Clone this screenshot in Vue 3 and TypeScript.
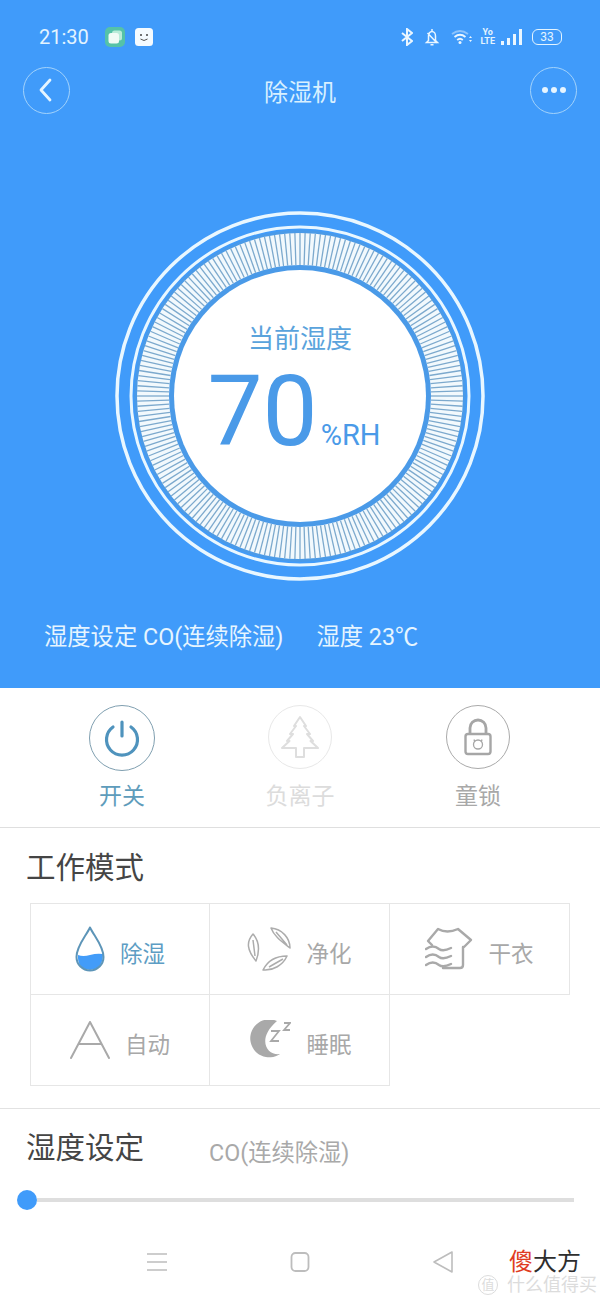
<script setup lang="ts">
const ticks: { x1: number; y1: number; x2: number; y2: number }[] = [];
const count = 200;
for (let i = 0; i < count; i++) {
  const a = (i / count) * Math.PI * 2;
  const c = Math.cos(a);
  const s = Math.sin(a);
  ticks.push({ x1: 185 + c * 131, y1: 185 + s * 131, x2: 185 + c * 163, y2: 185 + s * 163 });
}
</script>

<template>
  <div class="page">
    <section class="hero">
      <div class="status">
        <span class="time">21:30</span>
        <svg class="app-a" width="20" height="20" viewBox="0 0 20 20">
          <rect width="20" height="20" rx="5" fill="#55c2a8" />
          <rect x="7" y="3.500" width="10" height="10" rx="2.500" fill="#b9ecd9" />
          <rect x="3.500" y="6" width="10.500" height="10.500" rx="2.500" fill="#f1fbf6" />
        </svg>
        <svg class="app-b" width="18" height="18" viewBox="0 0 18 18">
          <rect width="18" height="18" rx="3.500" fill="#f4fbff" />
          <circle cx="6" cy="7" r="1" fill="#444" />
          <circle cx="12" cy="7" r="1" fill="#444" />
          <path d="M5.500 11 Q9 14 12.500 11" fill="none" stroke="#555" stroke-width="1" />
        </svg>
        <span class="spring"></span>
        <svg class="s-bt" width="12" height="18" viewBox="0 0 12 18" fill="none" stroke="#eaf6ff" stroke-width="2">
          <path d="M1 5 L11 13 L6 17 V1 L11 5 L1 13" />
        </svg>
        <svg class="s-bell" width="16" height="18" viewBox="0 0 16 18" fill="none" stroke="#eaf6ff" stroke-width="1.500">
          <path d="M8 1 V3 M4.500 12.500 V8 a3.500 4.500 0 0 1 7 0 V12.500 L13.500 14.500 H2.500 Z M6.500 16.800 H9.500 M3.500 5 L13 15" />
        </svg>
        <svg class="s-wifi" width="22" height="16" viewBox="0 0 22 16" fill="none" stroke="#eaf6ff" stroke-width="1.800">
          <path d="M1 5 Q9 -1 17 5" stroke-opacity=".45" />
          <path d="M3.500 8 Q9 3.500 14.500 8" />
          <path d="M6.200 11 Q9 8.500 11.800 11" />
          <circle cx="9" cy="13.500" r="1.500" fill="#eaf6ff" stroke="none" />
          <path d="M19.500 7 L21 9 H18 Z M18 11 H21 L19.500 13 Z" fill="#eaf6ff" stroke="none" />
        </svg>
        <span class="s-volte"><span>Yo</span><span>LTE</span></span>
        <svg class="s-sig" width="22" height="18" viewBox="0 0 22 18" fill="#eaf6ff">
          <rect x="0" y="13" width="3" height="4" />
          <rect x="6" y="10" width="3" height="7" />
          <rect x="12" y="6" width="3" height="11" />
          <rect x="18" y="1" width="3" height="16" />
        </svg>
        <span class="s-batt">33</span>
      </div>

      <header class="bar">
        <button class="round" type="button">
          <svg class="back" width="14" height="26" viewBox="0 0 14 26" fill="none" stroke="#e6f5ff" stroke-width="2.800" stroke-linecap="round" stroke-linejoin="round">
            <path d="M12 3 L3 13 L12 23" />
          </svg>
        </button>
        <h1 class="title">除湿机</h1>
        <button class="round" type="button">
          <svg width="26" height="8" viewBox="0 0 26 8" fill="#e6f5ff">
            <circle cx="4" cy="4" r="3" />
            <circle cx="13" cy="4" r="3" />
            <circle cx="22" cy="4" r="3" />
          </svg>
        </button>
      </header>

      <div class="gauge">
        <svg width="370" height="370" viewBox="0 0 370 370">
          <circle cx="185" cy="185" r="183" fill="none" stroke="#e9f7ff" stroke-width="3.500" />
          <circle cx="185" cy="185" r="169" fill="none" stroke="#e9f7ff" stroke-width="3" />
          <circle cx="185" cy="185" r="166" fill="#4a9ae8" />
          <circle cx="185" cy="185" r="147" fill="none" stroke="#f2f9fd" stroke-width="32" />
          <g stroke="#7ca9cd" stroke-width="1.300">
            <line v-for="(t, i) in ticks" :key="i" :x1="t.x1" :y1="t.y1" :x2="t.x2" :y2="t.y2" />
          </g>
          <circle cx="185" cy="185" r="126" fill="#ffffff" />
        </svg>
        <div class="readout">
          <div class="readout-label">当前湿度</div>
          <div class="readout-value"><span class="num">70</span><span class="unit">%RH</span></div>
        </div>
      </div>

      <div class="info">
        <span>湿度设定 CO(连续除湿)</span>
        <span>湿度 23℃</span>
      </div>
    </section>

    <section class="actions">
      <div class="action on">
        <div class="disc big">
          <svg width="38" height="38" viewBox="0 0 38 38" fill="none" stroke="#4f93bd" stroke-width="3.200" stroke-linecap="round">
            <path d="M19 3 V17" />
            <path d="M10 8 A15.500 15.500 0 1 0 28 8" />
          </svg>
        </div>
        <span>开关</span>
      </div>
      <div class="action off">
        <div class="disc">
          <svg width="38" height="44" viewBox="0 0 38 44" fill="none" stroke="#dedede" stroke-width="2" stroke-linejoin="round">
            <path d="M19 2 L25 11 H23 L29 19 H26 L32 26 H29.500 L37 33 H23 V42 H15 V33 H1 L8.500 26 H6 L12 19 H9 L15 11 H13 Z" />
          </svg>
        </div>
        <span>负离子</span>
      </div>
      <div class="action lock">
        <div class="disc">
          <svg width="28" height="38" viewBox="0 0 28 38" fill="none" stroke="#a6a6a6">
            <path d="M6 16 V10 a8 8 0 0 1 16 0 V16" stroke-width="2.800" />
            <rect x="1.500" y="16" width="25" height="20" rx="2.500" stroke-width="2.400" />
            <circle cx="14" cy="26.500" r="4.500" stroke-width="1.300" />
            <path d="M10 21.500 L10.800 24 M18 21.500 L17.200 24" stroke-width="1.300" />
          </svg>
        </div>
        <span>童锁</span>
      </div>
    </section>

    <section class="mode">
      <h2 class="heading">工作模式</h2>
      <div class="grid">
        <div class="cell active">
          <svg width="30" height="46" viewBox="0 0 30 46">
            <path d="M15 29 Q8 31 3 29 Q2 43 15 44 Q28 43 28 28 Q22 27 15 29Z" fill="#429cf9" />
            <path d="M15 1.500 C11 10 1.500 20 1.500 31 a13.500 13.500 0 0 0 27 0 C28.500 20 19 10 15 1.500Z" fill="none" stroke="#5d95b8" stroke-width="2" stroke-linejoin="round" />
          </svg>
          <span>除湿</span>
        </div>
        <div class="cell">
          <svg width="44" height="44" viewBox="0 0 44 44" fill="none" stroke="#acacac" stroke-width="1.500" stroke-linejoin="round">
            <path d="M6 7 C-1 15 0 23 9 34 C12 26 13 15 6 7Z M6 13 L8 29" />
            <path d="M24 1 C27 9 34 14 43 21 C43 11 35 2 24 1Z M29 5 L40 18" />
            <path d="M16 43 C26 44 36 38 40 29 C30 29 21 33 16 43Z M22 40 L36 32" />
          </svg>
          <span>净化</span>
        </div>
        <div class="cell">
          <svg width="48" height="44" viewBox="0 0 48 44" fill="none" stroke="#a9a9a9" stroke-width="2.400" stroke-linejoin="round" stroke-linecap="round">
            <path d="M7 18 L3 14 L13 2 Q22 7 33 2 L46 13 L39 20 H38 V38 Q38 41 35 41 H18" />
            <path d="M1 22 Q8 17 14 22 Q18 25 26 21" />
            <path d="M1 30 Q8 25 14 30 Q18 33 26 29" />
            <path d="M1 38 Q8 33 14 38 Q18 41 26 37" />
          </svg>
          <span>干衣</span>
        </div>
        <div class="cell">
          <svg width="40" height="38" viewBox="0 0 40 38" fill="none" stroke="#a9a9a9" stroke-width="2" stroke-linecap="round" stroke-linejoin="round">
            <path d="M1 37 L20 1 L39 37 M9 23 H31" />
          </svg>
          <span>自动</span>
        </div>
        <div class="cell">
          <svg width="44" height="40" viewBox="0 0 44 40">
            <path d="M30 1 A19 19 0 1 0 33 34 C20 36 9 19 30 1Z" fill="#a9a9a9" />
            <path d="M24 11 H32 L24 21 H32 M37 3 H43 L37 10 H43" fill="none" stroke="#a9a9a9" stroke-width="1.800" />
          </svg>
          <span>睡眠</span>
        </div>
      </div>
    </section>

    <section class="setting">
      <div class="setting-head">
        <h2 class="heading">湿度设定</h2>
        <span class="setting-value">CO(连续除湿)</span>
      </div>
      <div class="slider">
        <span class="thumb"></span>
        <span class="track"></span>
      </div>
    </section>

    <nav class="nav">
      <svg width="22" height="20" viewBox="0 0 22 20" stroke="#bdbdbd" stroke-width="1.500">
        <path d="M1 2 H21 M1 10 H21 M1 18 H21" />
      </svg>
      <svg width="20" height="22" viewBox="0 0 20 22" fill="none" stroke="#bdbdbd" stroke-width="1.800">
        <rect x="1.500" y="2" width="17" height="18" rx="4" />
      </svg>
      <svg width="22" height="24" viewBox="0 0 22 24" fill="none" stroke="#bdbdbd" stroke-width="1.600" stroke-linejoin="round">
        <path d="M20 2 V22 L2 12 Z" />
      </svg>
      <div class="mark">
        <div class="mark-top"><span class="red">傻</span>大方</div>
        <div class="mark-sub"><span class="mark-logo">值</span>什么值得买</div>
      </div>
    </nav>
  </div>
</template>

<style>
html, body { margin: 0; background: #fff; }
</style>

<style scoped>
.page {
  width: 600px;
  height: 1300px;
  overflow: hidden;
  background: #fff;
  font-family: Roboto, "Noto Sans CJK SC", sans-serif;
}
.hero {
  height: 688px;
  background: #409bfa;
  display: flex;
  flex-direction: column;
}
.status {
  height: 66px;
  padding: 8px 38px 0 39px;
  box-sizing: border-box;
  display: flex;
  align-items: center;
  color: #e3f4ff;
}
.time { font-size: 20px; width: 66px; }
.app-a { margin-right: 10px; }
.spring { flex: 1; }
.s-bt { margin-right: 11px; }
.s-bell { margin-right: 11px; }
.s-wifi { margin-right: 7px; }
.s-volte {
  display: flex;
  flex-direction: column;
  font-size: 9px;
  line-height: 9px;
  font-weight: 700;
  text-align: center;
  margin-right: 6px;
}
.s-sig { margin-right: 9px; }
.s-batt {
  width: 28px;
  height: 14px;
  border: 1px solid #e3f4ff;
  border-radius: 6px;
  font-size: 12px;
  line-height: 14px;
  text-align: center;
}
.bar {
  height: 48px;
  padding: 0 23px;
  display: flex;
  align-items: center;
  justify-content: space-between;
}
.round {
  width: 47px;
  height: 47px;
  padding: 0;
  border: 1px solid #a3d3fb;
  border-radius: 50%;
  background: transparent;
  display: flex;
  align-items: center;
  justify-content: center;
}
.back { margin-right: 4px; }
.title {
  margin: 0;
  font-size: 24px;
  font-weight: 400;
  color: #d8f0ff;
}
.gauge {
  position: relative;
  width: 370px;
  height: 370px;
  margin: 97px auto 0;
}
.gauge svg { display: block; }
.readout {
  position: absolute;
  inset: 0;
  display: flex;
  flex-direction: column;
  align-items: center;
  color: #4a9ae8;
}
.readout-label {
  margin-top: 110px;
  font-size: 26px;
  line-height: 36px;
  color: #5aa3dc;
}
.readout-value {
  display: flex;
  align-items: baseline;
  margin-top: 5px;
  margin-right: 12px;
}
.num { font-size: 98px; line-height: 100px; }
.unit { font-size: 29px; margin-left: 3px; }
.info {
  display: flex;
  gap: 33px;
  margin-top: 41px;
  padding-left: 44px;
  font-size: 23.300px;
  line-height: 30px;
  color: #e6f5ff;
}
.actions {
  height: 140px;
  box-sizing: border-box;
  border-bottom: 1px solid #dfdfdf;
  display: grid;
  grid-template-columns: repeat(3, 178px);
  justify-content: center;
  padding-top: 17px;
}
.action {
  display: flex;
  flex-direction: column;
  align-items: center;
  font-size: 23px;
  line-height: 32px;
}
.disc {
  width: 64px;
  height: 64px;
  margin-bottom: 12px;
  box-sizing: border-box;
  border: 1px solid #aaa;
  border-radius: 50%;
  display: flex;
  align-items: center;
  justify-content: center;
}
.disc.big { width: 66px; height: 66px; margin-bottom: 10px; border-color: #7f9fb0; }
.on { color: #5e9cbb; }
.off { color: #dcdcdc; }
.off .disc { border-color: #e8e8e8; }
.lock { color: #a8a8a8; }
.mode { height: 281px; box-sizing: border-box; border-bottom: 1px solid #e2e2e2; }
.heading {
  margin: 0;
  font-size: 29.500px;
  line-height: 40px;
  font-weight: 400;
  color: #454545;
}
.mode .heading { padding: 20px 0 0 26px; }
.grid {
  display: grid;
  grid-template-columns: repeat(3, 180px);
  grid-auto-rows: 91px;
  margin: 15px 0 0 30px;
}
.cell {
  box-sizing: border-box;
  margin: 0 0 -1px 0;
  border: 1px solid #e6e6e6;
  border-left-width: 0;
  display: flex;
  align-items: center;
  justify-content: center;
  gap: 15px;
  font-size: 22.500px;
  color: #a8a8a8;
}
.cell:nth-child(3n + 1) { border-left-width: 1px; }
.cell span { padding-top: 6px; }
.active { color: #5d9dc4; }
.setting { padding: 19px 0 0; }
.setting-head {
  display: flex;
  align-items: center;
  padding-left: 26px;
  gap: 65px;
}
.setting-value { font-size: 23.300px; color: #a9a9a9; padding-top: 5px; }
.slider {
  display: flex;
  align-items: center;
  margin-top: 22px;
  padding-left: 17px;
  height: 20px;
}
.thumb {
  width: 20px;
  height: 20px;
  border-radius: 50%;
  background: #409bfa;
  flex: none;
}
.track {
  width: 537px;
  height: 4px;
  background: #dedede;
}
.nav {
  position: relative;
  margin-top: 36px;
  display: flex;
  align-items: center;
  height: 32px;
  padding-left: 146px;
  gap: 122px;
}
.mark {
  position: absolute;
  left: 478px;
  top: 3px;
  width: 122px;
}
.mark-top {
  font-size: 24px;
  line-height: 26px;
  padding-left: 31px;
  color: #2e2e2e;
}
.red { color: #e03c22; }
.mark-sub {
  display: flex;
  align-items: center;
  font-size: 18px;
  line-height: 20px;
  color: #dcdcdc;
  white-space: nowrap;
}
.mark-logo {
  width: 20px;
  height: 20px;
  font-size: 13px;
  line-height: 18px;
  text-align: center;
  box-sizing: border-box;
  border: 1px solid #dcdcdc;
  border-radius: 50%;
  margin-right: 9px;
  flex: none;
}
</style>
